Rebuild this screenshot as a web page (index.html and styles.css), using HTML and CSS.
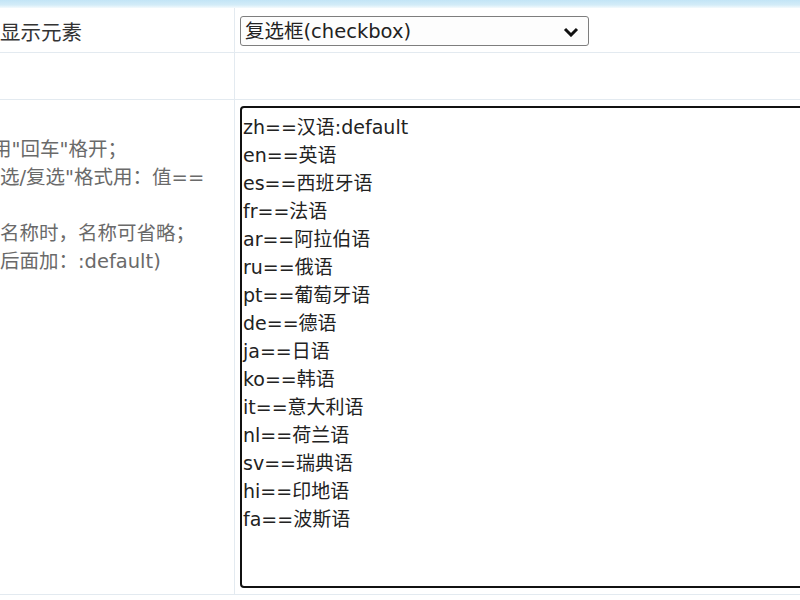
FILE: index.html
```html
<!DOCTYPE html>
<html>
<head lang="zh">
    <meta charset="UTF-8">
    <title>字段设置</title>
    <link rel="stylesheet" href="styles.css">
</head>
<body>
<div class="topbar"></div>
<table class="form">
    <tr>
        <th class="label">显示元素</th>
        <td>
            <div class="select-box">
                <select class="sel">
                    <option>复选框(checkbox)</option>
                    <option>单选框(radio)</option>
                    <option>下拉框(select)</option>
                </select>
                <svg class="chev" width="16" height="10" viewBox="0 0 16 10"><path d="M2 2 L8 8 L14 2" fill="none" stroke="#111" stroke-width="3"/></svg>
            </div>
        </td>
    </tr>
    <tr class="blank">
        <th></th>
        <td></td>
    </tr>
    <tr>
        <th class="tip">
            <div class="cut">用"回车"格开；</div>
            <div>选/复选"格式用：值==</div>
            <div>&nbsp;</div>
            <div>名称时，名称可省略；</div>
            <div>后面加：:default)</div>
        </th>
        <td class="area-cell">
<textarea class="opts">zh==汉语:default
en==英语
es==西班牙语
fr==法语
ar==阿拉伯语
ru==俄语
pt==葡萄牙语
de==德语
ja==日语
ko==韩语
it==意大利语
nl==荷兰语
sv==瑞典语
hi==印地语
fa==波斯语</textarea>
        </td>
    </tr>
</table>
</body>
</html>
```

FILE: styles.css
```css
*{
    padding:0;
    margin:0;
}
html,body{
    overflow:hidden;
    background:#fff;
    font-family:"DejaVu Sans","Noto Sans CJK SC",sans-serif;
}
.topbar{
    height:8px;
    background:linear-gradient(#c3e5f6 0%, #d3ecf8 60%, #f4fafd 100%);
}
.form{
    border-collapse:collapse;
    width:1000px;
}
.form th,
.form td{
    text-align:left;
    vertical-align:top;
    border-bottom:1px solid #e3eaf0;
}
.form th{
    width:234px;
    font-weight:normal;
    overflow:hidden;
    white-space:nowrap;
}
.form td{
    border-left:1px solid #e3eaf0;
    padding-left:5px;
}
.label{
    font-size:20.5px;
    color:#333;
    line-height:38px;
    padding-top:6px;
}
.form tr:first-child td{
    padding-top:8px;
    height:36px;
}
.blank th,
.blank td{
    height:46px;
}
.select-box{
    position:relative;
    width:349px;
}
.sel{
    appearance:none;
    -webkit-appearance:none;
    width:349px;
    height:30px;
    border:1px solid #7e7e7e;
    border-radius:3px;
    background:#fdfdfd;
    font-family:"DejaVu Sans","Noto Sans CJK SC",sans-serif;
    font-size:19.5px;
    color:#222;
    padding-left:4px;
    outline:none;
}
.chev{
    position:absolute;
    right:10px;
    top:11px;
}
.tip{
    font-size:19.5px;
    color:#6a6a6a;
    line-height:28px;
    padding-top:36px;
}
.cut{
    text-indent:-8px;
}
.area-cell{
    padding-top:6px;
    padding-bottom:6px;
}
.opts{
    display:block;
    width:600px;
    height:482px;
    box-sizing:border-box;
    border:2px solid #111;
    border-radius:4px;
    padding:5px 1px;
    font-family:"DejaVu Sans","Noto Sans CJK SC",sans-serif;
    font-size:19px;
    line-height:28px;
    color:#222;
    resize:none;
    outline:none;
    overflow:hidden;
}
```
